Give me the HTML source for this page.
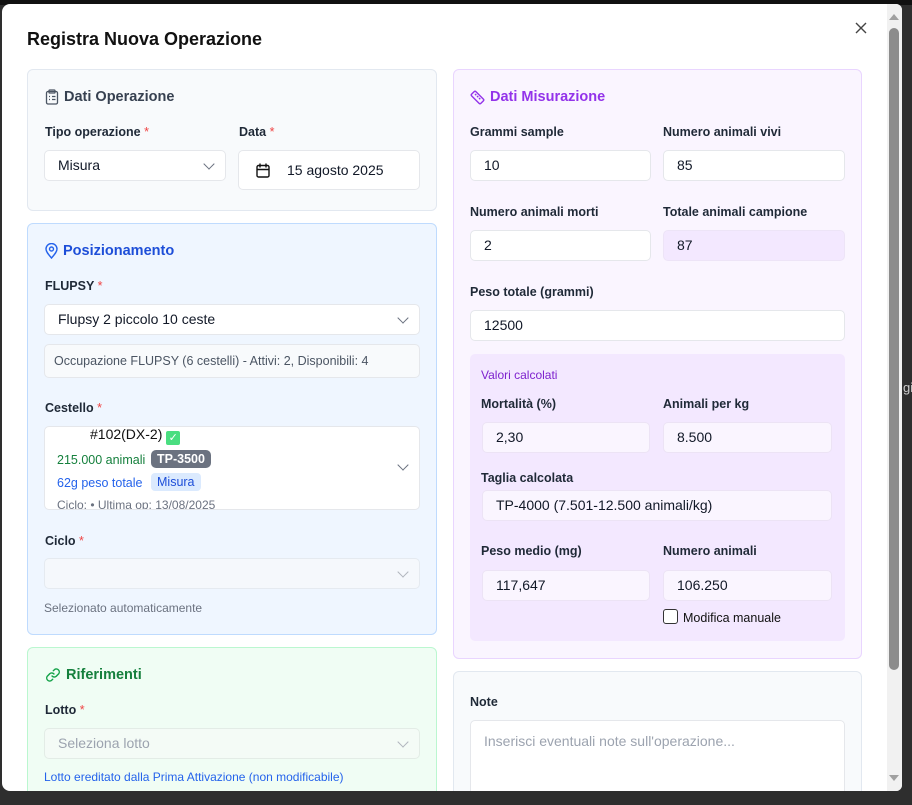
<!DOCTYPE html>
<html><head><meta charset="utf-8"><style>
*{box-sizing:border-box;margin:0;padding:0}
body{width:912px;height:805px;background:#2e2e2e;font-family:"Liberation Sans",sans-serif;color:#111827;position:relative;overflow:hidden}
.a{position:absolute}
#top{left:0;top:0;width:912px;height:5px;background:#111}
#modal{left:2px;top:4px;width:900px;height:787px;background:#fff;border-radius:8px 6px 6px 8px;overflow:hidden}
.card{position:absolute;border:1px solid;border-radius:6px}
.lbl{position:absolute;font-size:12.5px;font-weight:bold;color:#1f2937}
.req{color:#ef4444;font-weight:normal}
.in{position:absolute;height:31px;border:1px solid #e5e7eb;border-radius:5px;background:#fff;font-size:14px;padding-left:13px;line-height:29px;color:#111827}
.chev{position:absolute;right:12px;top:10px;width:8px;height:8px;border-right:1.4px solid #6b7280;border-bottom:1.4px solid #6b7280;transform:rotate(45deg)}
.h{position:absolute;font-size:14.5px;font-weight:bold;display:flex;align-items:center;gap:5px}
</style></head><body>
<div id="top" class="a"></div>
<div class="a" style="left:903px;top:380px;font-size:13px;color:#ccc">gi</div>
<div id="modal" class="a">
 <div class="a" style="left:25px;top:25px;font-size:18px;font-weight:bold;color:#111">Registra Nuova Operazione</div>
 <svg class="a" style="left:853px;top:18px" width="12" height="12" viewBox="0 0 12 12"><path d="M1 1L11 11M11 1L1 11" stroke="#444" stroke-width="1.4"/></svg>
 <div class="a" style="left:885px;top:0;width:15px;height:787px;background:#f1f1f1"></div>
 <div class="a" style="left:887px;top:24px;width:10px;height:642px;background:#8c8c8c;border-radius:5px"></div>
 <svg class="a" style="left:887px;top:9px" width="10" height="7"><path d="M0 7L5 1L10 7Z" fill="#a0a0a0"/></svg>
 <svg class="a" style="left:887px;top:771px" width="10" height="7"><path d="M0 0L5 6L10 0Z" fill="#a0a0a0"/></svg>

 <div class="card" style="left:25px;top:65px;width:410px;height:142px;background:#f8fafc;border-color:#e2e8f0">
  <div class="h" style="left:17px;top:19px;color:#374151"><svg width="14" height="16" viewBox="0 0 14 16" fill="none" stroke="#4b5563" stroke-width="1.3"><rect x="1.5" y="2.5" width="11" height="12.5" rx="1.5"/><rect x="4" y="1" width="6" height="3" rx="0.8"/><path d="M4 7.5h1M7 7.5h3.5M4 10.5h1M7 10.5h3.5"/></svg>Dati Operazione</div>
  <div class="lbl" style="left:17px;top:55px">Tipo operazione <span class="req">*</span></div>
  <div class="lbl" style="left:211px;top:55px">Data <span class="req">*</span></div>
  <div class="in" style="left:16px;top:80px;width:182px">Misura<div class="chev" style="top:9px"></div></div>
  <div class="in" style="left:210px;top:80px;width:182px;height:40px;line-height:38px;padding-left:48px">15 agosto 2025
   <svg class="a" style="left:17px;top:12px" width="14" height="15" viewBox="0 0 14 15" fill="none" stroke="#111" stroke-width="1.4"><rect x="1" y="2.5" width="12" height="11.5" rx="1.5"/><path d="M1 6.5h12M4 0.5v4M10 0.5v4"/></svg></div>
 </div>

 <div class="card" style="left:25px;top:219px;width:410px;height:412px;background:#eff6ff;border-color:#bfdbfe">
  <div class="h" style="left:17px;top:19px;color:#1d4ed8"><svg width="13" height="16" viewBox="0 0 13 16" fill="none" stroke="#2563eb" stroke-width="1.4"><path d="M6.5 15C3 11 1 8.5 1 6a5.5 5.5 0 0 1 11 0c0 2.5-2 5-5.5 9z"/><circle cx="6.5" cy="6" r="2"/></svg>Posizionamento</div>
  <div class="lbl" style="left:17px;top:55px">FLUPSY <span class="req">*</span></div>
  <div class="in" style="left:16px;top:80px;width:376px">Flupsy 2 piccolo 10 ceste<div class="chev" style="top:9px"></div></div>
  <div class="in" style="left:16px;top:120px;width:376px;height:34px;line-height:32px;background:#f8fafc;font-size:12.5px;color:#4b5563;padding-left:9px">Occupazione FLUPSY (6 cestelli) - Attivi: 2, Disponibili: 4</div>
  <div class="lbl" style="left:17px;top:177px">Cestello <span class="req">*</span></div>
  <div class="in" style="left:16px;top:202px;width:376px;height:84px;overflow:hidden;line-height:normal;padding:0">
   <div class="a" style="left:45px;top:-1px;font-size:14px;color:#111">#102(DX-2) <span style="display:inline-block;width:14px;height:14px;background:#4ade80;border-radius:2px;vertical-align:-2px;color:#fff;font-size:11px;text-align:center;line-height:14px">✓</span></div>
   <div class="a" style="left:12px;top:26px;font-size:12.5px;color:#15803d">215.000 animali</div>
   <div class="a" style="left:106px;top:23px;background:#6b7280;color:#fff;font-size:12.5px;font-weight:bold;padding:2px 6px;border-radius:5px">TP-3500</div>
   <div class="a" style="left:12px;top:49px;font-size:12.5px;color:#2563eb">62g peso totale</div>
   <div class="a" style="left:106px;top:46px;background:#dbeafe;color:#1d4ed8;font-size:12.5px;padding:2px 6px;border-radius:4px">Misura</div>
   <div class="a" style="left:12px;top:71px;font-size:12px;color:#6b7280">Ciclo: • Ultima op: 13/08/2025</div>
   <div class="chev" style="top:34px"></div>
  </div>
  <div class="lbl" style="left:17px;top:310px">Ciclo <span class="req">*</span></div>
  <div class="in" style="left:16px;top:334px;width:376px;background:#f5f8fc;border-color:#e5eaf0"><div class="chev" style="top:9px;border-color:#b0b5bd"></div></div>
  <div class="a" style="left:16px;top:377px;font-size:12px;color:#6b7280">Selezionato automaticamente</div>
 </div>

 <div class="card" style="left:25px;top:643px;width:410px;height:200px;background:#f0fdf4;border-color:#bbf7d0">
  <div class="h" style="left:17px;top:19px;color:#15803d"><svg width="16" height="16" viewBox="0 0 16 16" fill="none" stroke="#16a34a" stroke-width="1.4" stroke-linecap="round"><path d="M7 9a3 3 0 0 0 4.2.3l2.5-2.5a3 3 0 0 0-4.2-4.2L8.3 3.8"/><path d="M9 7a3 3 0 0 0-4.2-.3L2.3 9.2a3 3 0 0 0 4.2 4.2l1.2-1.2"/></svg>Riferimenti</div>
  <div class="lbl" style="left:17px;top:55px">Lotto <span class="req">*</span></div>
  <div class="in" style="left:16px;top:80px;width:376px;background:#f4fbf6;border-color:#e3ece6;color:#9ca3af">Seleziona lotto<div class="chev" style="top:9px;border-color:#b0b5bd"></div></div>
  <div class="a" style="left:16px;top:122px;font-size:12px;color:#2563eb">Lotto ereditato dalla Prima Attivazione (non modificabile)</div>
 </div>

 <div class="card" style="left:451px;top:65px;width:409px;height:590px;background:#faf5ff;border-color:#e9d5ff">
  <div class="h" style="left:16px;top:19px;color:#9333ea"><svg width="15" height="15" viewBox="0 0 15 15" fill="none" stroke="#9333ea" stroke-width="1.4"><rect x="1" y="4.5" width="13" height="6" rx="1.2" transform="rotate(45 7.5 7.5)"/><path d="M5 4l1.3 1.3M7 6l1.3 1.3M9 8l1.3 1.3"/></svg>Dati Misurazione</div>
  <div class="lbl" style="left:16px;top:55px">Grammi sample</div>
  <div class="lbl" style="left:209px;top:55px">Numero animali vivi</div>
  <div class="in" style="left:16px;top:80px;width:181px">10</div>
  <div class="in" style="left:209px;top:80px;width:182px">85</div>
  <div class="lbl" style="left:16px;top:135px">Numero animali morti</div>
  <div class="lbl" style="left:209px;top:135px">Totale animali campione</div>
  <div class="in" style="left:16px;top:160px;width:181px">2</div>
  <div class="in" style="left:209px;top:160px;width:182px;background:#f3e8ff;border-color:#ede4f7">87</div>
  <div class="lbl" style="left:16px;top:215px">Peso totale (grammi)</div>
  <div class="in" style="left:16px;top:240px;width:375px">12500</div>
  <div class="a" style="left:16px;top:284px;width:375px;height:287px;background:#f3e8ff;border-radius:5px">
   <div class="a" style="left:11px;top:14px;font-size:12px;color:#7e22ce">Valori calcolati</div>
   <div class="lbl" style="left:11px;top:43px">Mortalità (%)</div>
   <div class="lbl" style="left:193px;top:43px">Animali per kg</div>
   <div class="in" style="left:12px;top:68px;width:168px;background:#faf5ff;border-color:#ece3f5">2,30</div>
   <div class="in" style="left:193px;top:68px;width:169px;background:#faf5ff;border-color:#ece3f5">8.500</div>
   <div class="lbl" style="left:11px;top:117px">Taglia calcolata</div>
   <div class="in" style="left:12px;top:136px;width:350px;background:#faf5ff;border-color:#ece3f5">TP-4000 (7.501-12.500 animali/kg)</div>
   <div class="lbl" style="left:11px;top:190px">Peso medio (mg)</div>
   <div class="lbl" style="left:193px;top:190px">Numero animali</div>
   <div class="in" style="left:12px;top:216px;width:168px;background:#faf5ff;border-color:#ece3f5">117,647</div>
   <div class="in" style="left:193px;top:216px;width:169px;background:#faf5ff;border-color:#ece3f5">106.250</div>
   <div class="a" style="left:193px;top:255px;width:15px;height:15px;border:1.4px solid #333;border-radius:3px;background:#fff"></div>
   <div class="a" style="left:213px;top:257px;font-size:12.5px;color:#111">Modifica manuale</div>
  </div>
 </div>

 <div class="card" style="left:451px;top:667px;width:409px;height:200px;background:#f8fafc;border-color:#e2e8f0">
  <div class="lbl" style="left:16px;top:23px">Note</div>
  <div class="in" style="left:16px;top:48px;width:375px;height:100px;line-height:normal;padding-top:12px;color:#9ca3af">Inserisci eventuali note sull'operazione...</div>
 </div>
</div>
</body></html>
